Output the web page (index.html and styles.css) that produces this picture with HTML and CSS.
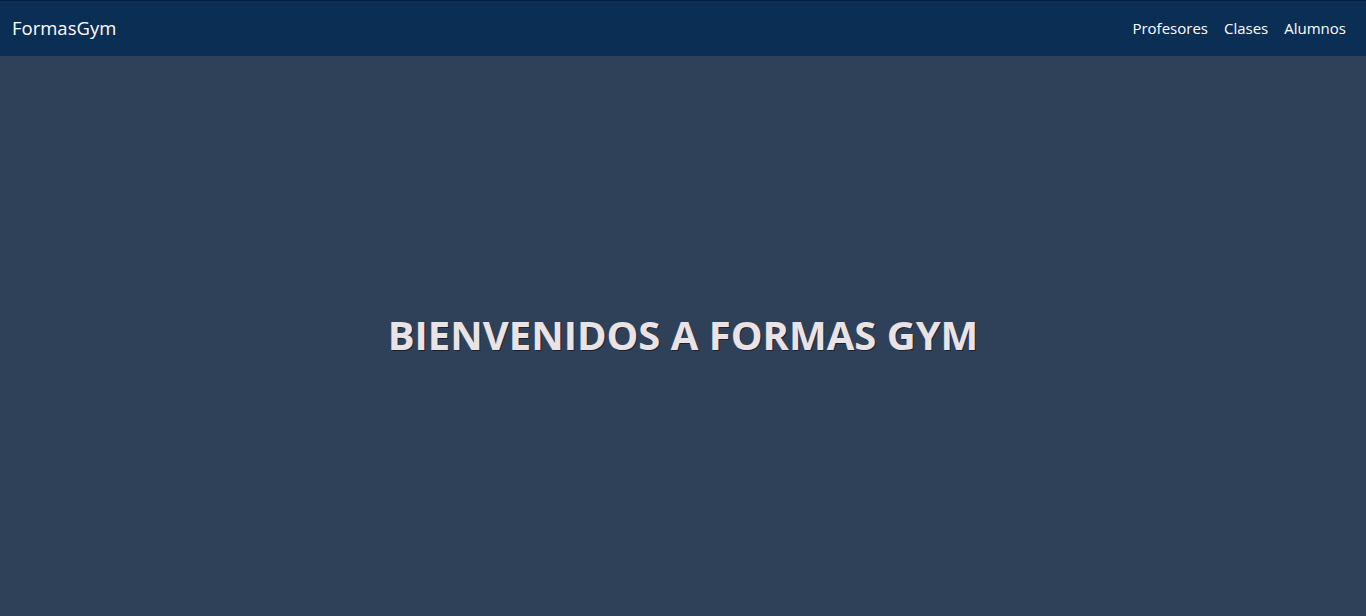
FILE: index.html
```html
<!DOCTYPE html>
<html lang="es">
<head>
<meta charset="utf-8">
<title>FormasGym</title>
<link rel="stylesheet" href="styles.css">
</head>
<body>
<nav class="navbar">
  <a class="brand" href="#">FormasGym</a>
  <ul class="nav-links">
    <li><a href="#">Profesores</a></li>
    <li><a href="#">Clases</a></li>
    <li><a href="#">Alumnos</a></li>
  </ul>
</nav>
<main class="hero">
  <h1 class="title">BIENVENIDOS A FORMAS GYM</h1>
</main>
</body>
</html>
```
FILE: styles.css
```css
* { box-sizing: border-box; }
html, body { margin: 0; height: 100%; }
body {
  font-family: "Open Sans", "Noto Sans", sans-serif;
  background: #2e4159;
  display: flex;
  flex-direction: column;
}
.navbar {
  height: 56px;
  background: #0b2e54;
  border-top: 1px solid #071f3d;
  display: flex;
  align-items: center;
  justify-content: space-between;
  padding: 0 12px 2px 12px;
  flex-shrink: 0;
}
.brand {
  color: #ffffff;
  font-size: 18.5px;
  text-decoration: none;
}
.nav-links {
  list-style: none;
  display: flex;
  gap: 16px;
  margin: 0;
  padding: 0 8px 0 0;
}
.nav-links a {
  color: #ffffff;
  font-size: 15px;
  text-decoration: none;
}
.hero {
  flex: 1;
  display: flex;
  align-items: center;
  justify-content: center;
}
.title {
  margin: 0 0 4px 0;
  color: #ebe3e3;
  font-size: 40px;
  font-weight: 700;
  text-shadow: 1px 1px 0 rgba(8, 14, 30, 0.6);
}
```
